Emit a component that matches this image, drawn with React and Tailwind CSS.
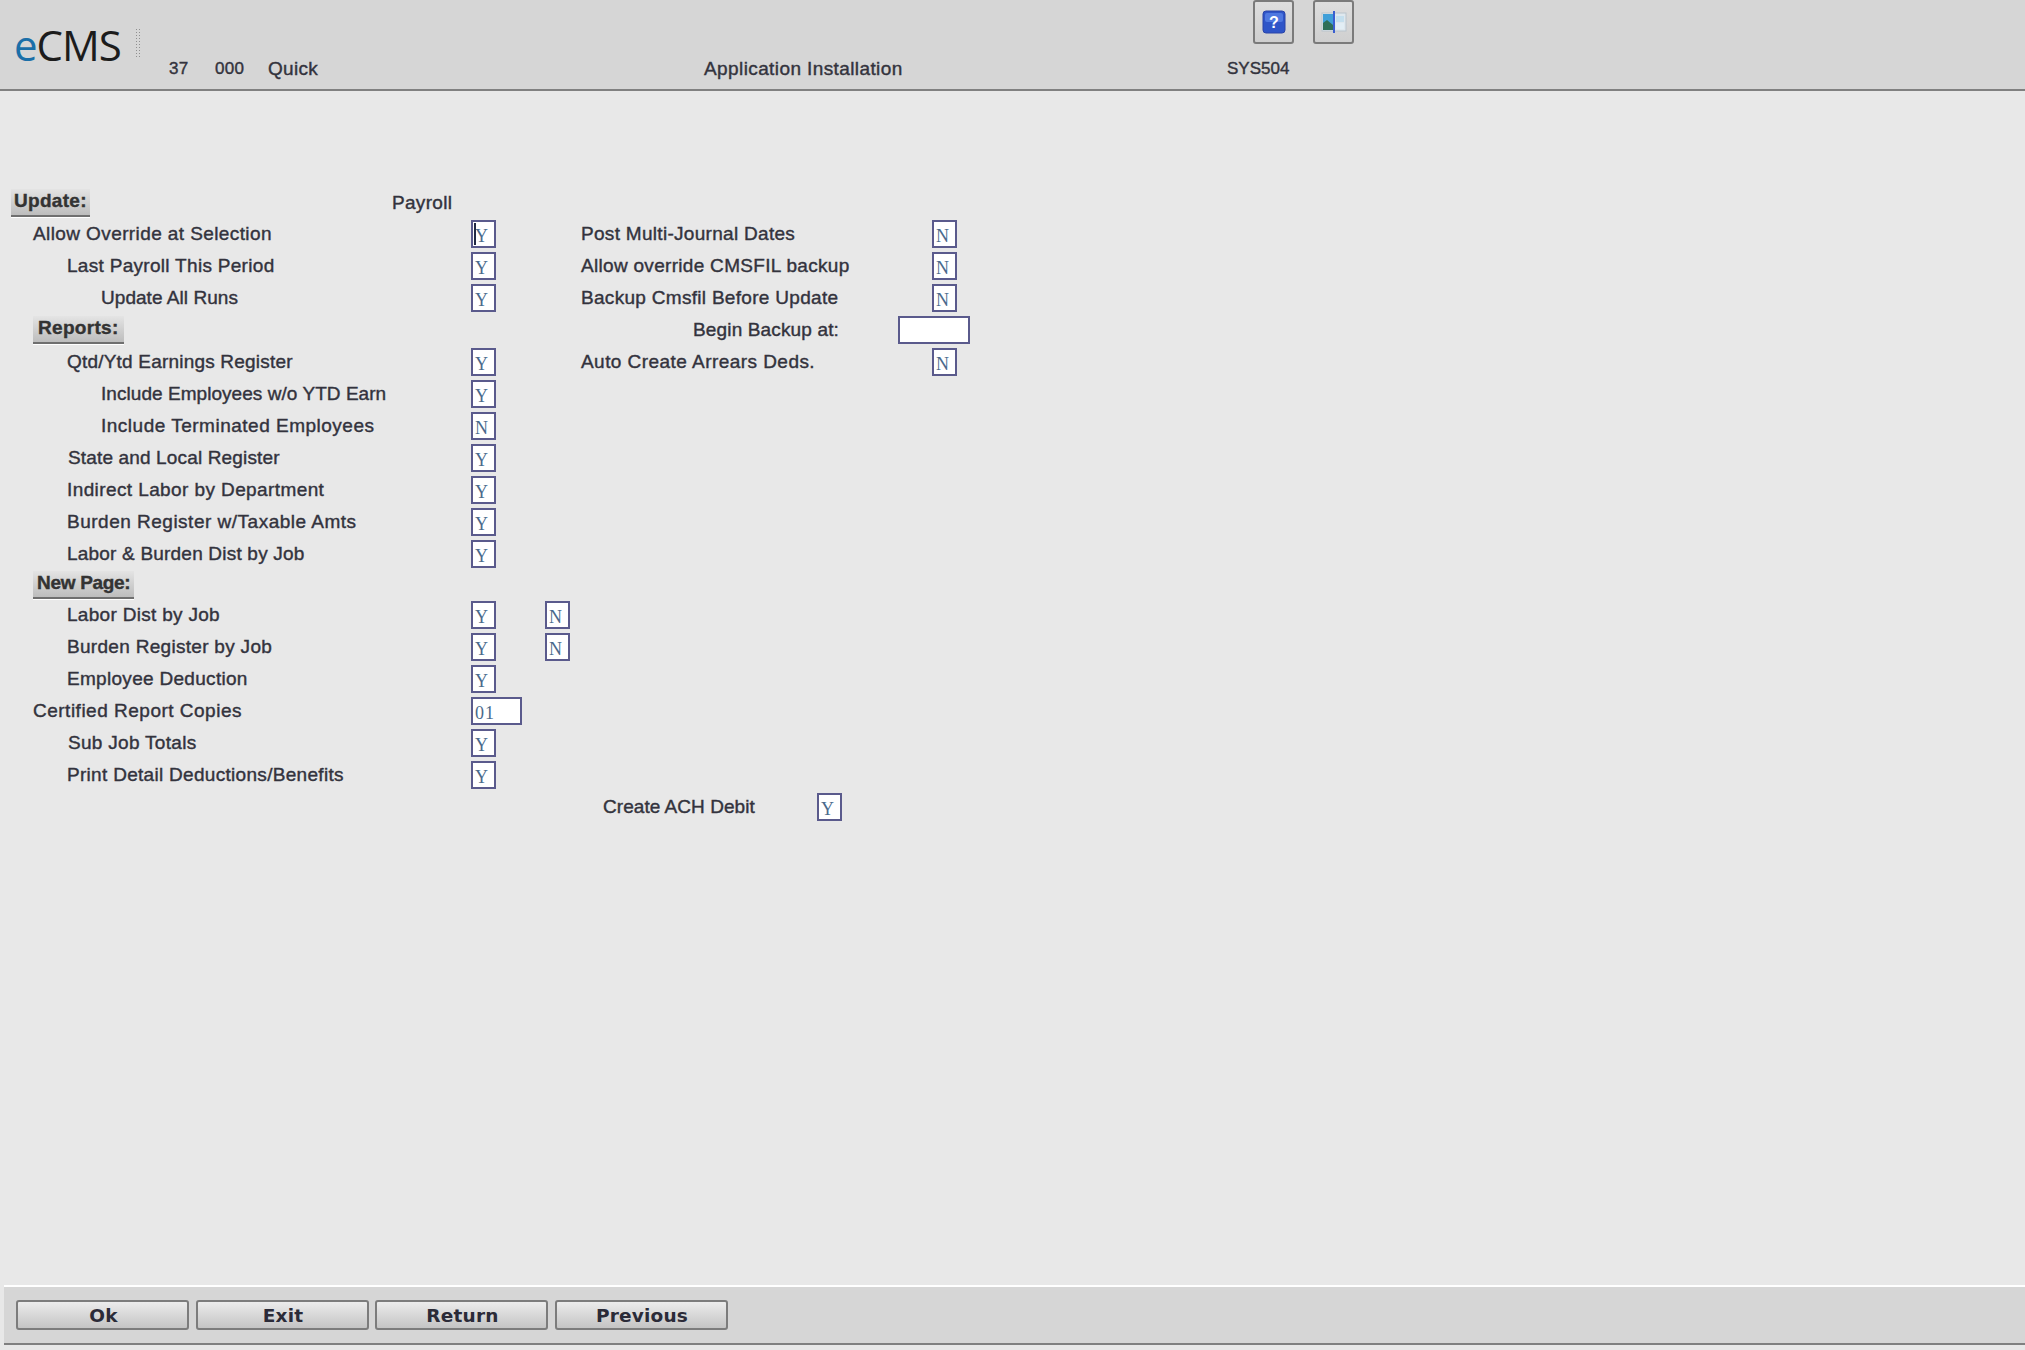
const sans = "font-['Liberation_Sans',Arial,sans-serif]";

function Field({ value = "", wide, caret, className = "" }) {
  return (
    <div
      className={`relative box-border h-[28px] border-2 border-[#5a5a8c] bg-white pl-[2px] pt-[3px] font-['Liberation_Serif',serif] text-[18px] leading-[22px] tracking-[1px] text-[#4a6a8c] [-webkit-text-stroke:0] ${
        wide || "w-[25px]"
      } ${className}`}
    >
      {value}
      {caret && <span className="absolute left-[1px] top-[1px] h-[22px] w-[2px] bg-[#222a44]" />}
    </div>
  );
}

function Tag({ children, className = "" }) {
  return (
    <span
      className={`inline-block h-[28px] border-b-2 border-[#6f6f6f] bg-gradient-to-b from-[#e4e4e4] to-[#bdbdbd] text-[19px] font-bold leading-[24px] text-[#333] shadow-[0_1px_0_#fff] ${className}`}
    >
      {children}
    </span>
  );
}

function Row({ label, indent = "pl-[33px]", track = "", a, b, wide, caret, right, h = "h-8" }) {
  return (
    <div className={`grid grid-cols-[471px_74px_36px_1fr] items-center ${h}`}>
      <div className={`${indent} ${track}`}>{label}</div>
      <div>{a && <Field value={a} wide={wide} caret={caret} />}</div>
      <div>{b && <Field value={b} />}</div>
      {right || <div />}
    </div>
  );
}

function Right({ label, value, labelClass = "w-[351px]", wide }) {
  return (
    <div className="flex items-center">
      <div className={labelClass}>{label}</div>
      <Field value={value} wide={wide} />
    </div>
  );
}

function HelpIcon() {
  return (
    <svg width="24" height="24" viewBox="0 0 24 24">
      <rect x="1" y="1" width="22" height="22" rx="3" fill="#2f55c8" stroke="#2a44a8" />
      <rect x="3" y="3" width="18" height="9" rx="2" fill="#4f78e0" />
      <text x="12" y="18" textAnchor="middle" fontSize="16" fontWeight="700" fontFamily="Liberation Sans" fill="#fff">
        ?
      </text>
    </svg>
  );
}

function WindowIcon() {
  return (
    <svg width="26" height="22" viewBox="0 0 26 22">
      <rect x="1" y="2" width="24" height="18" fill="#dfe8ee" stroke="#b9c4cc" />
      <rect x="2" y="3" width="10" height="16" fill="#3f9fd8" />
      <path d="M2 19 L2 12 L6 9 L12 14 L12 19 Z" fill="#2f6f58" />
      <rect x="15" y="5" width="8" height="6" fill="#c4dfee" />
      <rect x="15" y="12" width="8" height="6" fill="#e2eef5" />
      <rect x="12" y="0" width="2" height="22" fill="#3a5fd0" />
    </svg>
  );
}

function ToolButton({ children, className = "" }) {
  return (
    <button className={`flex h-[44px] w-[41px] items-center justify-center rounded-[3px] border-2 border-[#7b7b7b] bg-gradient-to-b from-[#dedede] to-[#cfcfcf] ${className}`}>
      {children}
    </button>
  );
}

function FootButton({ children }) {
  return (
    <button className="h-[30px] w-[173px] rounded-[3px] border-2 border-[#7c7c7c] bg-gradient-to-b from-[#ececec] to-[#c4c4c4] pl-[2px] pt-[2px] font-['DejaVu_Sans',sans-serif] text-[18.5px] font-bold leading-none tracking-[0.2px] text-[#2b2b38] [-webkit-text-stroke:0]">
      {children}
    </button>
  );
}

export default function App() {
  const l1 = "pl-[67px]";
  const l2 = "pl-[101px]";

  return (
    <div className={`flex h-[1350px] w-[2025px] flex-col overflow-hidden bg-[#e8e8e8] text-[19px] tracking-[0.3px] text-[#33333d] [-webkit-text-stroke:0.4px] ${sans}`}>
      <header className="flex h-[91px] shrink-0 border-b-2 border-[#808080] bg-[#d6d6d6]">
        <div className="flex w-[169px] shrink-0 items-start pl-[14px] pt-[20px]">
          <span className="font-['Open_Sans',sans-serif] text-[42px] font-normal leading-[50px] tracking-[-1px] text-[#1c1c1c] [-webkit-text-stroke:0]">
            <span className="text-[#1b6fa8]">e</span>CMS
          </span>
          <span className="ml-[14px] mt-[8px] h-[30px] w-[6px] bg-[radial-gradient(#8f8f8f_1px,transparent_1px)] bg-[length:3px_3px]" />
        </div>
        <div className="flex flex-col">
          <div className="ml-[1084px] flex h-[57px] gap-[19px]">
            <ToolButton>
              <HelpIcon />
            </ToolButton>
            <ToolButton>
              <WindowIcon />
            </ToolButton>
          </div>
          <div className="flex pt-[1px] leading-[22px]">
            <span className="w-[46px] text-[17px]">37</span>
            <span className="w-[53px] text-[17px]">000</span>
            <span className="w-[436px]">Quick</span>
            <span className="w-[523px] tracking-[0.4px]">Application Installation</span>
            <span className="text-[17px] tracking-normal">SYS504</span>
          </div>
        </div>
      </header>

      <main className="flex-1 pt-[95px]">
        <div className="grid h-8 grid-cols-[392px_1fr] items-center">
          <div className="pl-[11px]">
            <Tag className="px-[3px]">Update:</Tag>
          </div>
          <div className="pt-[3px]">Payroll</div>
        </div>
        <Row label="Allow Override at Selection" track="tracking-[0.4px]" a="Y" caret right={<Right label="Post Multi-Journal Dates" value="N" />} />
        <Row label="Last Payroll This Period" indent={l1} a="Y" right={<Right label="Allow override CMSFIL backup" value="N" />} />
        <Row label="Update All Runs" indent={l2} track="tracking-[0.05px]" a="Y" right={<Right label="Backup Cmsfil Before Update" value="N" />} />
        <Row
          label={<Tag className="-translate-y-[1px] px-[5px]">Reports:</Tag>}
          right={<Right label={<span className="tracking-[0.15px]">Begin Backup at:</span>} labelClass="w-[317px] pl-[112px]" wide="w-[72px]" />}
        />
        <Row label="Qtd/Ytd Earnings Register" indent={l1} track="tracking-[0.2px]" a="Y" right={<Right label={<span className="tracking-[0.45px]">Auto Create Arrears Deds.</span>} value="N" />} />
        <Row label="Include Employees w/o YTD Earn" indent={l2} track="tracking-[0.05px]" a="Y" />
        <Row label="Include Terminated Employees" indent={l2} track="tracking-[0.5px]" a="N" />
        <Row label="State and Local Register" indent="pl-[68px]" track="tracking-[0.15px]" a="Y" />
        <Row label="Indirect Labor by Department" indent={l1} track="tracking-[0.4px]" a="Y" />
        <Row label="Burden Register w/Taxable Amts" indent={l1} track="tracking-[0.5px]" a="Y" />
        <Row label="Labor & Burden Dist by Job" indent={l1} track="tracking-[0.2px]" a="Y" />
        <Row label={<Tag className="-translate-y-[1px] px-[4px] tracking-[-0.3px]">New Page:</Tag>} h="h-[29px]" />
        <Row label="Labor Dist by Job" indent={l1} a="Y" b="N" />
        <Row label="Burden Register by Job" indent={l1} a="Y" b="N" />
        <Row label="Employee Deduction" indent={l1} a="Y" />
        <Row label="Certified Report Copies" track="tracking-[0.5px]" a="01" wide="w-[51px]" />
        <Row label="Sub Job Totals" indent="pl-[68px]" a="Y" />
        <Row label="Print Detail Deductions/Benefits" indent={l1} a="Y" />
        <Row right={<Right label={<span className="tracking-[0.05px]">Create ACH Debit</span>} labelClass="w-[236px] pl-[22px]" value="Y" />} />
      </main>

      <footer className="mb-[5px] ml-[4px] flex h-[60px] shrink-0 items-center gap-[6.5px] border-b-2 border-t-2 border-b-[#808080] border-t-white bg-[#d6d6d6] pl-[12px]">
        <FootButton>Ok</FootButton>
        <FootButton>Exit</FootButton>
        <FootButton>Return</FootButton>
        <FootButton>Previous</FootButton>
      </footer>
    </div>
  );
}
